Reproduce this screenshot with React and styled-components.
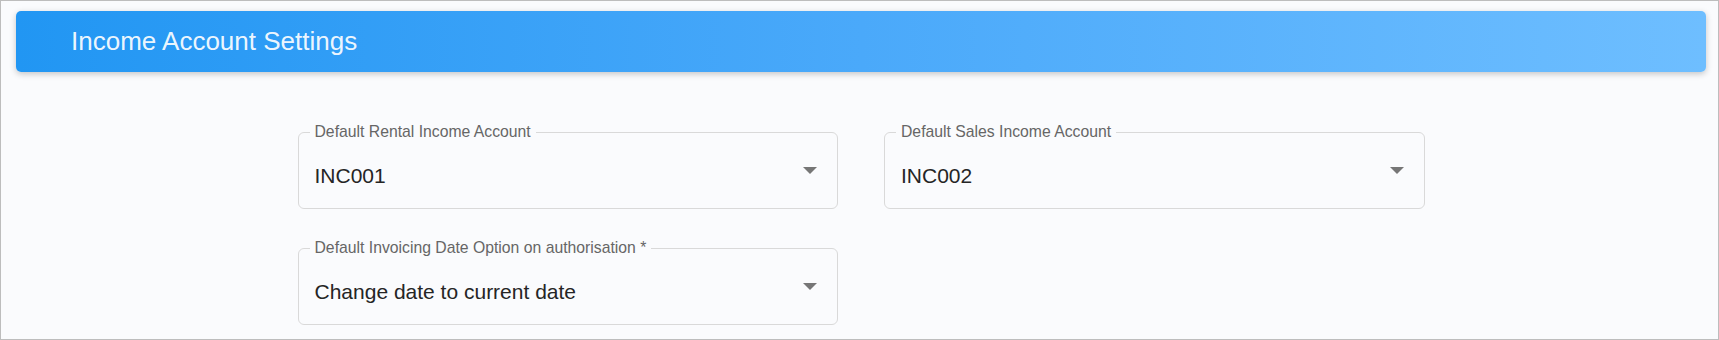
import React from "react";
import styled, { createGlobalStyle } from "styled-components";

const GlobalStyle = createGlobalStyle`
  html, body {
    margin: 0;
    padding: 0;
    background: #fafbfd;
  }
  * {
    box-sizing: border-box;
  }
`;

const Page = styled.div`
  height: 340px;
  border: 1px solid #bdbdbd;
  background: #fafbfd;
  padding: 10px 12px 0 15px;
  font-family: "Liberation Sans", Arial, sans-serif;
`;

const Header = styled.div`
  height: 61px;
  display: flex;
  align-items: center;
  padding-left: 55px;
  border-radius: 5px;
  background: linear-gradient(90deg, #2196f3 0%, #4aa9fa 50%, #6ebeff 100%);
  box-shadow: 0 2px 6px rgba(0, 0, 0, 0.22);
`;

const Title = styled.h1`
  margin: 0;
  font-size: 26px;
  font-weight: 400;
  color: rgba(255, 255, 255, 0.93);
`;

const Form = styled.div`
  width: 1127px;
  margin: 51px auto 0;
  display: grid;
  grid-template-columns: 1fr 1fr;
  column-gap: 46px;
  row-gap: 30px;
`;

const Outline = styled.fieldset`
  margin: 0;
  min-width: 0;
  height: 86px;
  padding: 0 20px 0 11px;
  border: 1px solid #d9d9d9;
  border-radius: 6px;
`;

const Label = styled.legend`
  padding: 0 5px;
  font-size: 15.75px;
  line-height: 18px;
  color: #666666;
`;

const Row = styled.div`
  display: flex;
  justify-content: space-between;
  align-items: flex-start;
  padding-left: 5px;
`;

const Value = styled.span`
  margin-top: 23px;
  font-size: 21px;
  color: #252525;
`;

const Arrow = styled.svg`
  margin-top: 26px;
  flex: none;
`;

const SelectField = ({ label, value }) => (
  <Outline>
    <Label>{label}</Label>
    <Row>
      <Value>{value}</Value>
      <Arrow width="14" height="7" viewBox="0 0 14 7">
        <path d="M0 0 L14 0 L7 7 Z" fill="#767676" />
      </Arrow>
    </Row>
  </Outline>
);

const fields = [
  { label: "Default Rental Income Account", value: "INC001" },
  { label: "Default Sales Income Account", value: "INC002" },
  {
    label: "Default Invoicing Date Option on authorisation *",
    value: "Change date to current date",
  },
];

const App = () => {
  return (
    <>
      <GlobalStyle />
      <Page>
        <Header>
          <Title>Income Account Settings</Title>
        </Header>
        <Form>
          {fields.map((f) => (
            <SelectField key={f.label} label={f.label} value={f.value} />
          ))}
        </Form>
      </Page>
    </>
  );
};

export default App;
